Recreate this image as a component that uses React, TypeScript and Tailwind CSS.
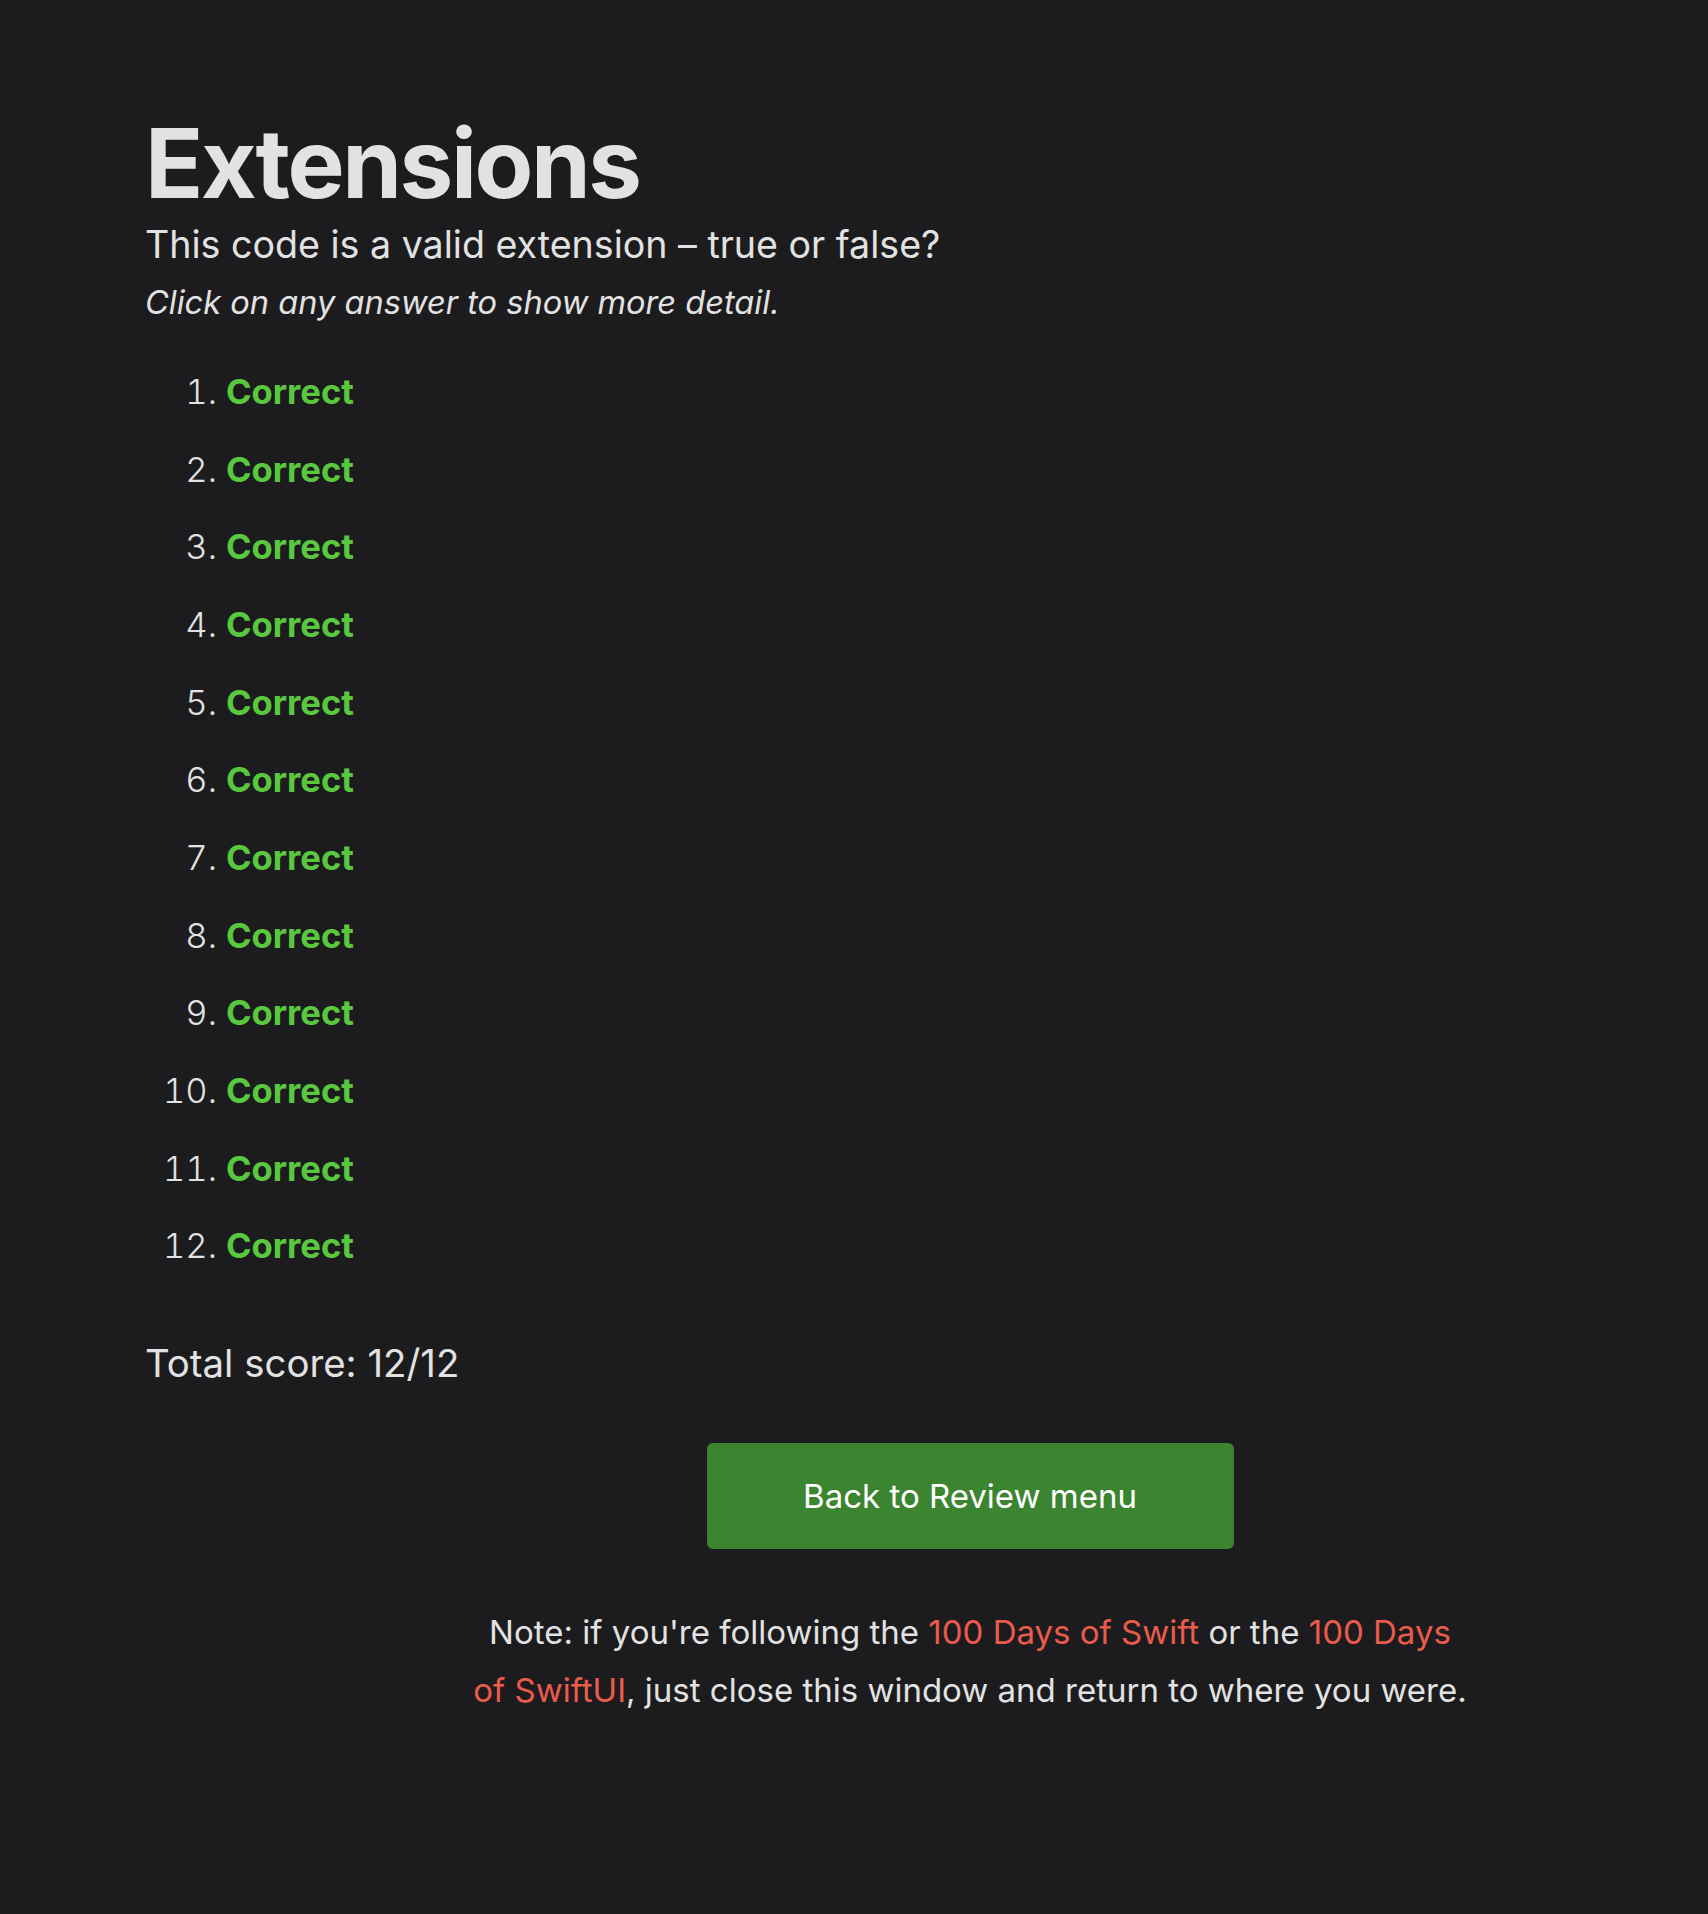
import React from 'react';

const items: number[] = [1, 2, 3, 4, 5, 6, 7, 8, 9, 10, 11, 12];

const App: React.FC = () => {
  return (
    <div className="min-h-[1914px] bg-[#1c1c1e] font-['Inter',sans-serif] text-[#e2e2e2]">
      <div className="pl-[145px] pt-[108px]">
        {/* Heading */}
        <h1 className="text-[96px] font-bold leading-[110px] tracking-[-0.025em]">Extensions</h1>
        <p className="mt-[3px] text-[37.6px] leading-[48px]">
          This code is a valid extension – true or false?
        </p>
        <p className="mt-[11px] text-[32.6px] italic leading-[44px]">
          Click on any answer to show more detail.
        </p>

        {/* Answers */}
        <ol className="mt-[29px] flex flex-col">
          {items.map((n: number) => (
            <li key={n} className="flex h-[77.7px] items-center text-[34.6px]">
              <span className="w-[72px] text-right font-light tabular-nums">{n}.</span>
              <span className="ml-[9px] cursor-pointer font-bold text-[#5ac83e]">Correct</span>
            </li>
          ))}
        </ol>

        <p className="mt-[54px] text-[38.4px] leading-[48px]">Total score: 12/12</p>
      </div>

      {/* Footer */}
      <div className="ml-[472px] mt-[56px] flex w-[996px] flex-col items-center">
        <button
          type="button"
          className="flex h-[106px] w-[527px] items-center justify-center rounded-[6px] bg-[#3c8530] text-[33px] text-white"
        >
          Back to Review menu
        </button>
        <p className="mt-[54px] text-center text-[33px] leading-[58px]">
          Note: if you're following the <a className="text-[#eb5b4b]">100 Days of Swift</a> or the{' '}
          <a className="text-[#eb5b4b]">100 Days of SwiftUI</a>, just close this window and return to where you were.
        </p>
      </div>
    </div>
  );
};

export default App;
